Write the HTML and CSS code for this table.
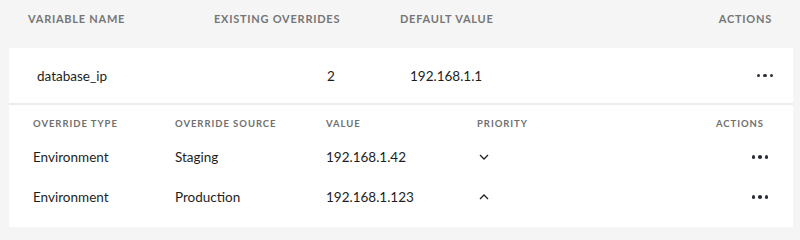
FILE: index.html
```html
<!DOCTYPE html>
<html lang="en">
<head>
    <meta charset="UTF-8">
    <meta name="viewport" content="width=device-width, initial-scale=1.0">
    <title>Variables</title>
    <link rel="stylesheet" href="styles.css">
</head>
<body>
    <div class="page">
        <div class="table-head">
            <span>Variable Name</span>
            <span>Existing Overrides</span>
            <span>Default Value</span>
            <span class="right">Actions</span>
        </div>

        <div class="card">
            <div class="var-row">
                <span>database_ip</span>
                <span>2</span>
                <span>192.168.1.1</span>
                <span class="dots"><i></i><i></i><i></i></span>
            </div>

            <div class="overrides">
                <div class="ov-head">
                    <span>Override Type</span>
                    <span>Override Source</span>
                    <span>Value</span>
                    <span>Priority</span>
                    <span class="right head-actions">Actions</span>
                </div>
                <div class="ov-row">
                    <span>Environment</span>
                    <span>Staging</span>
                    <span>192.168.1.42</span>
                    <span class="chevron">
                        <svg width="10" height="6" viewBox="0 0 10 6"><path d="M1 1 L5 5 L9 1" fill="none" stroke="#222" stroke-width="1.3"/></svg>
                    </span>
                    <span class="dots"><i></i><i></i><i></i></span>
                </div>
                <div class="ov-row">
                    <span>Environment</span>
                    <span>Production</span>
                    <span>192.168.1.123</span>
                    <span class="chevron">
                        <svg width="10" height="6" viewBox="0 0 10 6"><path d="M1 5 L5 1 L9 5" fill="none" stroke="#222" stroke-width="1.3"/></svg>
                    </span>
                    <span class="dots"><i></i><i></i><i></i></span>
                </div>
            </div>
        </div>
    </div>
</body>
</html>
```

FILE: styles.css
```css
body {
    margin: 0;
    padding: 0;
    font-family: 'Lato', 'Liberation Sans', sans-serif;
    background-color: #f5f5f5;
    color: #1e1e1e;
}

.page {
    padding: 0 7px 0 9px;
}

.right {
    justify-self: end;
}

.table-head {
    display: grid;
    grid-template-columns: 186px 186px 1fr auto;
    align-items: center;
    height: 36px;
    margin-bottom: 12px;
    padding: 0 21px 0 19px;
    font-size: 11px;
    font-weight: 700;
    letter-spacing: 0.75px;
    text-transform: uppercase;
    color: #767676;
}

.card {
    background: #fff;
}

.var-row {
    display: grid;
    grid-template-columns: 290px 83px 1fr auto;
    align-items: center;
    height: 55px;
    padding: 0 20px 0 28px;
    font-size: 13.5px;
    border-bottom: 2px solid #ececec;
}

.overrides {
    padding: 10px 25px 10px 24px;
}

.ov-head,
.ov-row {
    display: grid;
    grid-template-columns: 142px 151px 151px 1fr auto;
    align-items: center;
}

.ov-head {
    height: 16px;
    margin-bottom: 6px;
    font-size: 9.5px;
    font-weight: 700;
    letter-spacing: 0.95px;
    text-transform: uppercase;
    color: #707070;
}

.head-actions {
    padding-right: 4px;
}

.ov-row {
    height: 40px;
    font-size: 13.5px;
}

.chevron {
    display: flex;
    padding-left: 2px;
}

.dots {
    display: flex;
    gap: 3px;
}

.dots i {
    width: 3.5px;
    height: 3.5px;
    border-radius: 50%;
    background: #2a2f36;
}
```
